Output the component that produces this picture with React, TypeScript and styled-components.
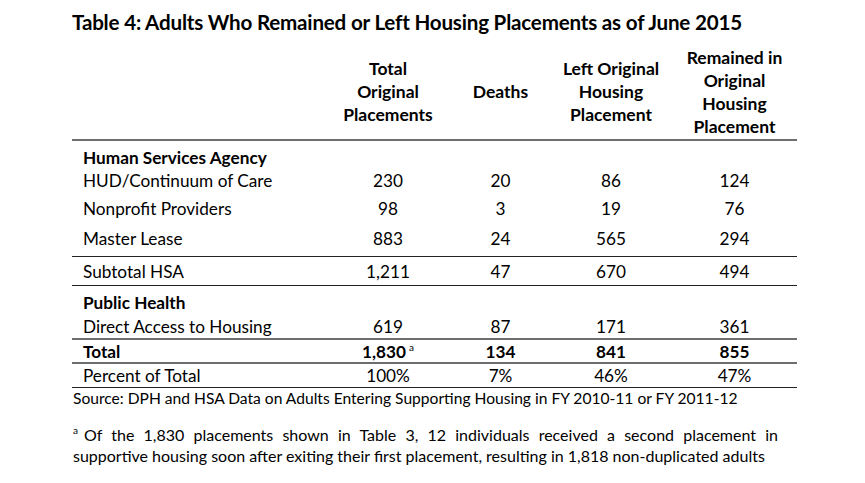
import React from 'react';
import styled, { createGlobalStyle } from 'styled-components';

const GlobalStyle = createGlobalStyle`
    html, body {
        margin: 0;
        padding: 0;
        background: #ffffff;
    }
    body {
        font-family: Lato, "Open Sans", sans-serif;
        color: #000;
    }
`;

const Page = styled.div`
    width: 865px;
    height: 483px;
    padding: 10px 0 0 72px;
    box-sizing: border-box;
`;

const Title = styled.h1`
    margin: 0;
    font-size: 20.6px;
    line-height: 24px;
    font-weight: 700;
    letter-spacing: -0.2px;
`;

const Table = styled.div`
    width: 725px;
    margin-top: 10px;
`;

type Line = 'none' | 'thin' | 'thick';

const Row = styled.div<{ $h: number; $pt?: number; $pb?: number; $line?: Line; $bold?: boolean }>`
    display: grid;
    grid-template-columns: 253px 126px 99px 122px 125px;
    align-items: center;
    height: ${p => p.$h}px;
    box-sizing: content-box;
    padding-top: ${p => p.$pt ?? 0}px;
    padding-bottom: ${p => p.$pb ?? 0}px;
    font-size: 17.2px;
    font-weight: ${p => (p.$bold ? 700 : 400)};
    border-bottom: ${p =>
        p.$line === 'thick' ? '2px solid #6e6e6e' : p.$line === 'thin' ? '1px solid #222' : 'none'};
`;

const HeadRow = styled.div`
    display: grid;
    grid-template-columns: 253px 126px 99px 122px 125px;
    align-items: center;
    height: 95px;
    border-bottom: 2px solid #6e6e6e;
    font-size: 17.5px;
    font-weight: 700;
    line-height: 23px;
`;

const HeadCell = styled.div`
    text-align: center;
`;

const Label = styled.div<{ $bold?: boolean }>`
    padding-left: 11px;
    font-weight: ${p => (p.$bold ? 700 : 'inherit')};
`;

const Num = styled.div`
    text-align: center;
`;

const Sup = styled.sup`
    font-size: 10px;
    font-weight: 400;
    line-height: 0;
    vertical-align: 7px;
    margin-left: 3px;
`;

const Source = styled.p`
    margin: 0;
    font-size: 15.6px;
    line-height: 21px;
    padding-left: 1px;
`;

const Note = styled.p`
    margin: 15px 0 0;
    width: 705px;
    font-size: 16px;
    line-height: 21px;
    text-align: justify;
    padding-left: 1px;
`;

const NoteSup = styled.sup`
    font-size: 10px;
    line-height: 0;
    vertical-align: 7px;
    margin-right: 6px;
`;

const hsaRows = [
    { label: 'HUD/Continuum of Care', vals: ['230', '20', '86', '124'] },
    { label: 'Nonprofit Providers', vals: ['98', '3', '19', '76'] },
    { label: 'Master Lease', vals: ['883', '24', '565', '294'] },
];

const Cells = ({ vals }: { vals: string[] }) => (
    <>
        {vals.map((v, i) => (
            <Num key={i}>{v}</Num>
        ))}
    </>
);

export default function App() {
    return (
        <Page>
            <GlobalStyle />
            <Title>Table 4: Adults Who Remained or Left Housing Placements as of June 2015</Title>
            <Table>
                <HeadRow>
                    <div />
                    <HeadCell>Total<br />Original<br />Placements</HeadCell>
                    <HeadCell>Deaths</HeadCell>
                    <HeadCell>Left Original<br />Housing<br />Placement</HeadCell>
                    <HeadCell>Remained in<br />Original<br />Housing<br />Placement</HeadCell>
                </HeadRow>

                <Row $h={22} $pt={5}>
                    <Label $bold>Human Services Agency</Label>
                </Row>
                <Row $h={25}>
                    <Label>{hsaRows[0].label}</Label>
                    <Cells vals={hsaRows[0].vals} />
                </Row>
                <Row $h={30}>
                    <Label>{hsaRows[1].label}</Label>
                    <Cells vals={hsaRows[1].vals} />
                </Row>
                <Row $h={30} $pb={3} $line="thin">
                    <Label>{hsaRows[2].label}</Label>
                    <Cells vals={hsaRows[2].vals} />
                </Row>
                <Row $h={28} $line="thin">
                    <Label>Subtotal HSA</Label>
                    <Cells vals={['1,211', '47', '670', '494']} />
                </Row>

                <Row $h={26} $pt={3}>
                    <Label $bold>Public Health</Label>
                </Row>
                <Row $h={23} $line="thick">
                    <Label>Direct Access to Housing</Label>
                    <Cells vals={['619', '87', '171', '361']} />
                </Row>
                <Row $h={22} $bold $line="thick">
                    <Label>Total</Label>
                    <Num>1,830<Sup>a</Sup></Num>
                    <Num>134</Num>
                    <Num>841</Num>
                    <Num>855</Num>
                </Row>
                <Row $h={23} $line="thin">
                    <Label>Percent of Total</Label>
                    <Cells vals={['100%', '7%', '46%', '47%']} />
                </Row>
            </Table>
            <Source>Source: DPH and HSA Data on Adults Entering Supporting Housing in FY 2010-11 or FY 2011-12</Source>
            <Note>
                <NoteSup>a</NoteSup>Of the 1,830 placements shown in Table 3, 12 individuals received a second placement in
                supportive housing soon after exiting their first placement, resulting in 1,818 non-duplicated adults
            </Note>
        </Page>
    );
}
